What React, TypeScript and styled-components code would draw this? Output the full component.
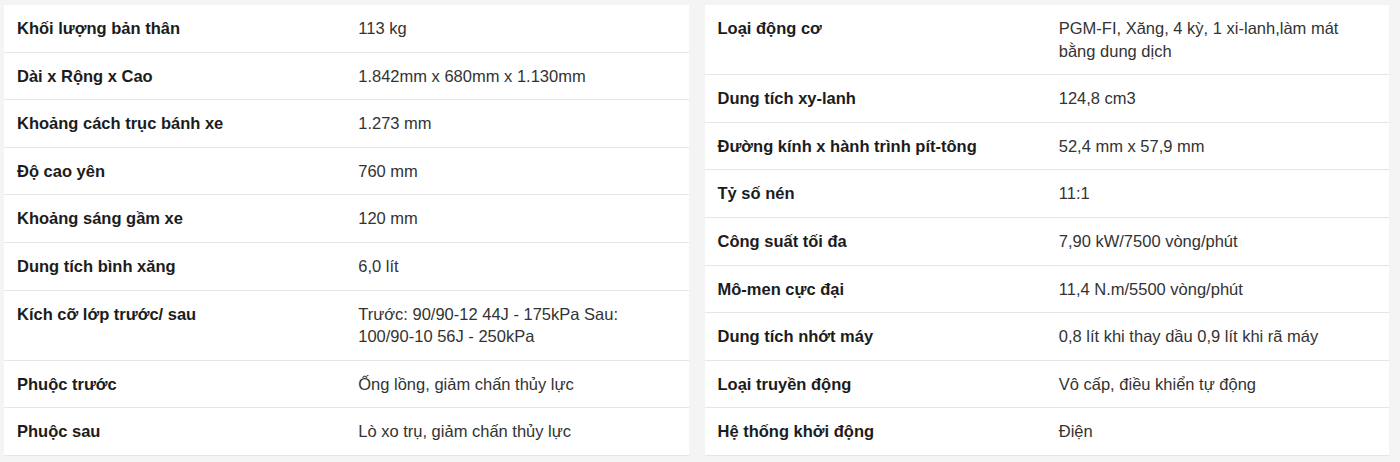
import styled, { createGlobalStyle } from 'styled-components';

interface Spec {
  label: string;
  value: string;
}

const leftSpecs: Spec[] = [
  { label: 'Khối lượng bản thân', value: '113 kg' },
  { label: 'Dài x Rộng x Cao', value: '1.842mm x 680mm x 1.130mm' },
  { label: 'Khoảng cách trục bánh xe', value: '1.273 mm' },
  { label: 'Độ cao yên', value: '760 mm' },
  { label: 'Khoảng sáng gầm xe', value: '120 mm' },
  { label: 'Dung tích bình xăng', value: '6,0 lít' },
  { label: 'Kích cỡ lớp trước/ sau', value: 'Trước: 90/90-12 44J - 175kPa Sau: 100/90-10 56J - 250kPa' },
  { label: 'Phuộc trước', value: 'Ống lồng, giảm chấn thủy lực' },
  { label: 'Phuộc sau', value: 'Lò xo trụ, giảm chấn thủy lực' },
];

const rightSpecs: Spec[] = [
  { label: 'Loại động cơ', value: 'PGM-FI, Xăng, 4 kỳ, 1 xi-lanh,làm mát bằng dung dịch' },
  { label: 'Dung tích xy-lanh', value: '124,8 cm3' },
  { label: 'Đường kính x hành trình pít-tông', value: '52,4 mm x 57,9 mm' },
  { label: 'Tỷ số nén', value: '11:1' },
  { label: 'Công suất tối đa', value: '7,90 kW/7500 vòng/phút' },
  { label: 'Mô-men cực đại', value: '11,4 N.m/5500 vòng/phút' },
  { label: 'Dung tích nhớt máy', value: '0,8 lít khi thay dầu 0,9 lít khi rã máy' },
  { label: 'Loại truyền động', value: 'Vô cấp, điều khiển tự động' },
  { label: 'Hệ thống khởi động', value: 'Điện' },
];

const GlobalStyle = createGlobalStyle`
  html, body {
    margin: 0;
    padding: 0;
    background: #f4f4f4;
  }
  body {
    font-family: "Liberation Sans", Arial, sans-serif;
  }
`;

export default function App() {
  return (
    <>
      <GlobalStyle />
      <Page>
        {[leftSpecs, rightSpecs].map((specs, i) => (
          <SpecTable key={i}>
            {specs.map((spec) => (
              <SpecRow key={spec.label}>
                <Label>{spec.label}</Label>
                <Value>{spec.value}</Value>
              </SpecRow>
            ))}
          </SpecTable>
        ))}
      </Page>
    </>
  );
}

const Page = styled.div`
  display: grid;
  grid-template-columns: 1fr 1fr;
  column-gap: 16px;
  align-items: start;
  padding: 5px 11px 6px 4px;
  background: #f4f4f4;
`;

const SpecTable = styled.div`
  background: #ffffff;
`;

const SpecRow = styled.div`
  display: grid;
  grid-template-columns: 1fr 1fr;
  padding: 12px 0;
  border-bottom: 1px solid #e6e6e6;
  font-size: 16.5px;
  line-height: 22.6px;
`;

const Label = styled.div`
  padding: 0 13px;
  font-weight: 700;
  color: #1c1c1c;
`;

const Value = styled.div`
  padding: 0 22px 0 12px;
  color: #333333;
`;
